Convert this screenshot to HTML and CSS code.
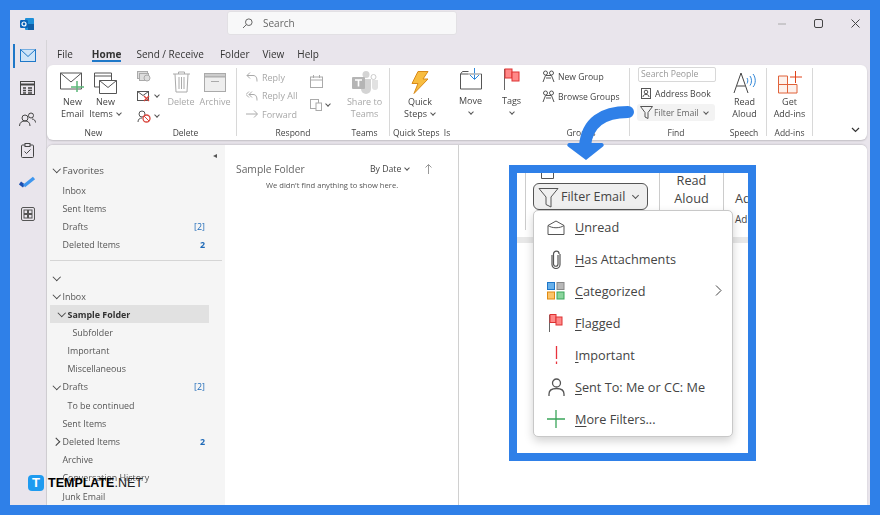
FILE: index.html
```html
<!DOCTYPE html>
<html lang="en">
<head>
<meta charset="utf-8">
<title>Outlook Filter Email</title>
<link rel="stylesheet" href="styles.css">
</head>
<body>
<div class="frame">
<div class="window">
  <header class="titlebar">
    <svg class="app-logo" width="14" height="14" viewBox="0 0 14 14"><rect x="5" y="1" width="9" height="12" rx="1" fill="#1f8fd8"/><rect x="8" y="7" width="6" height="6" fill="#0f5fa8"/><rect x="0" y="3" width="8" height="8" rx="1.2" fill="#0b63b8"/><circle cx="4" cy="7" r="2" fill="none" stroke="#fff" stroke-width="1.2"/></svg>
    <div class="search">
      <svg width="11" height="11" viewBox="0 0 11 11" fill="none" stroke="#666"><circle cx="6.8" cy="4.2" r="3.3"/><path d="M4.4 6.6 1 10"/></svg>
      <span>Search</span>
    </div>
    <div class="controls">
      <svg width="8" height="8" viewBox="0 0 8 8" stroke="#aaa" fill="none"><path d="M0 4h8"/></svg>
      <svg width="9" height="9" viewBox="0 0 9 9" stroke="#444" fill="none"><rect x=".5" y=".5" width="8" height="8" rx="1.5"/></svg>
      <svg width="9" height="9" viewBox="0 0 9 9" stroke="#444" fill="none"><path d="m.5.5 8 8M8.500.5l-8 8"/></svg>
    </div>
  </header>
  <div class="body">
    <nav class="rail">
      <div class="rail-item active"><svg width="16" height="13" viewBox="0 0 16 13" fill="#cfe4f7" stroke="#1f78c8"><rect x=".5" y=".5" width="15" height="12"/><path d="m.5.500 7.500 7 7.500-7"/></svg></div>
      <div class="rail-item"><svg width="15" height="15" viewBox="0 0 15 15" fill="none" stroke="#444"><rect x=".5" y="1.500" width="14" height="13"/><path d="M.5 4.500h14" stroke-width="2"/><path d="M3 8h3M8 8h4M3 10.500h3M8 10.500h4M3 13h3M8 13h4" stroke-width="1.300"/></svg></div>
      <div class="rail-item"><svg width="17" height="14" viewBox="0 0 17 14" fill="none" stroke="#444"><circle cx="6" cy="6" r="3"/><path d="M.5 14c0-3.500 2.500-5 5.500-5s5 1.500 5 5"/><circle cx="12" cy="3.500" r="2.500"/><path d="M13 7c2 0 3.500 1.500 3.500 3.500"/></svg></div>
      <div class="rail-item"><svg width="13" height="15" viewBox="0 0 13 15" fill="none" stroke="#444"><rect x=".5" y="2" width="12" height="12.500" rx="1"/><rect x="4" y=".5" width="5" height="3" fill="#e9e5ec"/><path d="m3.500 8.500 2 2 4-4"/></svg></div>
      <div class="rail-item"><svg width="17" height="13" viewBox="0 0 17 13" fill="none"><path d="m1 7 4 3" stroke="#1c4fb0" stroke-width="3.500"/><path d="m5 10 10-8" stroke="#3f96ee" stroke-width="3.500"/></svg></div>
      <div class="rail-item"><svg width="14" height="14" viewBox="0 0 14 14" fill="none" stroke="#555"><rect x=".5" y=".5" width="13" height="13" rx="1.500"/><rect x="3" y="3" width="3.500" height="3.500"/><rect x="7.500" y="3" width="3.500" height="3.500"/><rect x="3" y="7.500" width="3.500" height="3.500"/><rect x="7.500" y="7.500" width="3.500" height="3.500"/></svg></div>
    </nav>
    <div class="main">
      <div class="tabs">
        <span class="tab t-file">File</span>
        <span class="tab tab-home">Home</span>
        <span class="tab t-send">Send / Receive</span>
        <span class="tab t-folder">Folder</span>
        <span class="tab t-view">View</span>
        <span class="tab">Help</span>
      </div>
      <section class="ribbon">
        <div class="group g-new">
          <div class="group-body">
            <div class="big w33"><div class="ico"><svg width="25" height="21" viewBox="0 0 25 21" fill="none" stroke="#555"><path d="M.5 1h21v16H.5z" fill="#fff"/><path d="m.5 1 10.500 9 10.500-9"/><path d="M17 9v11M11 15h13" stroke="#5cb87a" stroke-width="1.500"/></svg></div><span>New</span><span>Email</span></div>
            <div class="big w33"><div class="ico"><svg width="23" height="23" viewBox="0 0 23 23" fill="none" stroke="#555"><path d="M.5 2h17v14H.5zM.5 5h17"/><path d="M5.500 9.500h17v13h-17z" fill="#fff"/><path d="m5.500 9.500 8.500 7 8.500-7"/></svg></div><span>New</span><span>Items<i class="caret"></i></span></div>
          </div>
          <div class="group-label">New</div>
        </div>
        <div class="group g-delete">
          <div class="group-body">
            <div class="small-icons">
              <svg width="14" height="11" viewBox="0 0 14 11" fill="#ddd" stroke="#aaa"><rect x=".5" y=".5" width="10" height="7"/><rect x="2.500" y="2.500" width="9" height="7"/><circle cx="10" cy="7" r="3"/></svg>
              <span class="small-line"><svg width="14" height="12" viewBox="0 0 14 12" fill="none" stroke="#555"><rect x=".5" y="1.500" width="11" height="9"/><path d="m.5 1.500 5.500 4 5.500-4"/><path d="m7 6 5 5m0-5-5 5" stroke="#d9453c" stroke-width="1.300"/></svg><i class="caret"></i></span>
              <span class="small-line"><svg width="14" height="13" viewBox="0 0 14 13" fill="none" stroke="#555"><circle cx="5" cy="4" r="3"/><path d="M1 12c0-3 2-4 4-4"/><circle cx="9.500" cy="8.500" r="3.500" stroke="#d9453c" stroke-width="1.300"/><path d="m7 6 5 5" stroke="#d9453c"/></svg><i class="caret"></i></span>
            </div>
            <div class="big w32 off"><div class="ico"><svg width="17" height="22" viewBox="0 0 17 22" fill="none" stroke="#aaa"><path d="M0 3h17M5.500 3V1h6v2M2 3l1 18h11l1-18M6 6v12M8.500 6v12M11 6v12"/></svg></div><span>Delete</span></div>
            <div class="big w36 off"><div class="ico"><svg width="22" height="19" viewBox="0 0 22 19" fill="#eee" stroke="#aaa"><rect x=".5" y=".5" width="21" height="3.500" fill="#ccc"/><rect x=".5" y="4" width="21" height="14.500"/><path d="M7 8.500h8"/></svg></div><span>Archive</span></div>
          </div>
          <div class="group-label">Delete</div>
        </div>
        <div class="group g-respond">
          <div class="group-body">
            <div class="stack off">
              <span class="line"><svg width="12" height="10" viewBox="0 0 12 10" fill="none" stroke="#aaa"><path d="M4 .5 1 3.500l3 3M1 3.500h6c3 0 4 2 4 6"/></svg>Reply</span>
              <span class="line"><svg width="12" height="10" viewBox="0 0 12 10" fill="none" stroke="#aaa"><path d="M3 .5 0 3.500l3 3M6 .5 3 3.500l3 3M3 3.500h4c3 0 4 2 4 6"/></svg>Reply All</span>
              <span class="line"><svg width="12" height="10" viewBox="0 0 12 10" fill="none" stroke="#aaa"><path d="M8 1.500 11.500 5 8 8.500M11 5H0"/></svg>Forward</span>
            </div>
            <div class="respond-more">
              <svg width="13" height="13" viewBox="0 0 13 13" fill="none" stroke="#aaa"><rect x=".5" y="2" width="12" height="10.500"/><path d="M.5 5h12M3.500 0v3M9.500 0v3"/></svg>
              <span class="small-line"><svg width="12" height="12" viewBox="0 0 12 12" fill="none" stroke="#aaa"><rect x=".5" y=".5" width="8" height="9"/><rect x="6" y="4" width="5.500" height="7.500" fill="#fff"/></svg><i class="caret"></i></span>
            </div>
          </div>
          <div class="group-label">Respond</div>
        </div>
        <div class="group g-teams">
          <div class="group-body">
            <div class="big w50 off"><div class="ico"><svg width="26" height="23" viewBox="0 0 26 23" fill="#d4d4d4"><circle cx="14" cy="3.500" r="3.500"/><circle cx="21.500" cy="6" r="2.500" fill="none" stroke="#ccc"/><path d="M9 8h10v10a5 5 0 0 1-10 0z"/><path d="M20 9h6v7a3 3 0 0 1-6 0z" fill="#e2e2e2"/><rect y="6" width="13" height="12" rx="1" fill="#b5b5b5"/><path d="M3 9h7M6.500 9v6.500" stroke="#fff" stroke-width="1.600"/></svg></div><span>Share to</span><span>Teams</span></div>
          </div>
          <div class="group-label">Teams</div>
        </div>
        <div class="group g-quick">
          <div class="group-body">
            <div class="big w60"><div class="ico"><svg width="18" height="23" viewBox="0 0 18 23"><path d="M7 .5h10l-5 7.500h5L3 22.500l4-10H1z" fill="#f8bd40" stroke="#d88a1a"/></svg></div><span>Quick</span><span>Steps<i class="caret"></i></span></div>
            <div class="big w41 short"><div class="ico"><svg width="22" height="22" viewBox="0 0 22 22" fill="none" stroke="#555"><path d="M.5 6h21v15H.5zM.5 6l2-2.500h6"/><path d="M14.500 0v11" stroke="#2f86d8"/><path d="m10 7 4.500 4.500L19 7" stroke="#2f86d8"/><path d="M8 6h13" stroke="#ddd"/></svg></div><span>Move</span><span class="caret-line"><i class="caret"></i></span></div>
            <div class="big w41 short"><div class="ico"><svg width="16" height="22" viewBox="0 0 16 22" fill="none"><path d="M.5 1v21" stroke="#666"/><rect x="1" y="1" width="7" height="9" fill="#f88" stroke="#d33"/><rect x="8" y="4" width="7" height="9" fill="#f88" stroke="#d33"/></svg></div><span>Tags</span><span class="caret-line"><i class="caret"></i></span></div>
          </div>
          <div class="group-label label-left">Quick Steps &nbsp;Is</div>
        </div>
        <div class="group g-groups">
          <div class="group-body">
            <div class="stack groups-stack">
              <span class="line"><svg width="13" height="13" viewBox="0 0 13 13" fill="none" stroke="#555"><circle cx="3.500" cy="3" r="2"/><circle cx="9.500" cy="3" r="2"/><path d="M1 12l2.500-6.500h6L12 12M4 8h5"/></svg>New Group</span>
              <span class="line"><svg width="13" height="13" viewBox="0 0 13 13" fill="none" stroke="#555"><circle cx="3.500" cy="3" r="2"/><circle cx="9.500" cy="3" r="2"/><path d="M1 12l2.500-6.500h6L12 12M4 8h5"/></svg>Browse Groups</span>
            </div>
          </div>
          <div class="group-label">Groups</div>
        </div>
        <div class="group g-find">
          <div class="group-body find-body">
            <div class="search-people">Search People</div>
            <span class="line"><svg width="10" height="11" viewBox="0 0 10 11" fill="none" stroke="#555"><rect x=".5" y=".5" width="9" height="10"/><circle cx="5" cy="4" r="1.800"/><path d="M2 9c0-2 1.500-2.500 3-2.500S8 7 8 9"/></svg>Address Book</span>
            <span class="line filter-line"><svg width="13" height="13" viewBox="0 0 13 13" fill="none" stroke="#555"><path d="M.5.500h12L8 6.500v6l-3-1.500V6.500z"/></svg>Filter Email<i class="caret"></i></span>
          </div>
          <div class="group-label">Find</div>
        </div>
        <div class="group g-speech">
          <div class="group-body">
            <div class="big w44"><div class="ico"><svg width="23" height="23" viewBox="0 0 23 23" fill="none"><path d="m1 22 7-20 7 20M4 15h8" stroke="#444"/><path d="M14 7c1 1.500 1 4 0 5.500M17 5c2 2.500 2 7 0 9.500M20 3c3 3.500 3 10 0 13" stroke="#2f86d8"/></svg></div><span>Read</span><span>Aloud</span></div>
          </div>
          <div class="group-label">Speech</div>
        </div>
        <div class="group g-addins">
          <div class="group-body">
            <div class="big w46"><div class="ico"><svg width="24" height="23" viewBox="0 0 24 23" fill="none" stroke="#e0623a"><path d="M.5 5h9v8.500h-9zM.5 13.500h9V22h-9zM9.500 13.500H19V22H9.500z" fill="#fdf1ec"/><path d="M17.500 0v12M12 6h12" stroke="#e0421a"/></svg></div><span>Get</span><span>Add-ins</span></div>
          </div>
          <div class="group-label">Add-ins</div>
        </div>
        <svg class="ribbon-collapse" width="9" height="6" viewBox="0 0 9 6" fill="none" stroke="#333" stroke-width="1.200"><path d="m1 1 3.500 3.500L8 1"/></svg>
      </section>
      <section class="content">
        <aside class="nav">
          <div class="nav-collapse">◂</div>
          <div class="row head"><i class="chev d"></i>Favorites</div>
          <div class="row"><i class="chev"></i>Inbox</div>
          <div class="row"><i class="chev"></i>Sent Items</div>
          <div class="row"><i class="chev"></i><span class="grow">Drafts</span><b class="count thin">[2]</b></div>
          <div class="row"><i class="chev"></i><span class="grow">Deleted Items</span><b class="count">2</b></div>
          <hr class="nav-rule">
          <div class="row"><i class="chev d"></i></div>
          <div class="row"><i class="chev d"></i>Inbox</div>
          <div class="row lvl1 selected"><i class="chev d"></i>Sample Folder</div>
          <div class="row lvl2"><i class="chev"></i>Subfolder</div>
          <div class="row lvl1"><i class="chev"></i>Important</div>
          <div class="row lvl1"><i class="chev"></i>Miscellaneous</div>
          <div class="row"><i class="chev d"></i><span class="grow">Drafts</span><b class="count thin">[2]</b></div>
          <div class="row lvl1"><i class="chev"></i>To be continued</div>
          <div class="row"><i class="chev"></i>Sent Items</div>
          <div class="row"><i class="chev r"></i><span class="grow">Deleted Items</span><b class="count">2</b></div>
          <div class="row"><i class="chev"></i>Archive</div>
          <div class="row"><i class="chev"></i>Conversation History</div>
          <div class="row"><i class="chev"></i>Junk Email</div>
        </aside>
        <div class="list">
          <div class="list-head">
            <span class="list-title">Sample Folder</span>
            <span class="sort">By Date<i class="caret"></i></span>
            <svg width="7" height="10" viewBox="0 0 7 10" fill="none" stroke="#999"><path d="M3.500 10V.5M.5 3.500l3-3 3 3"/></svg>
          </div>
          <p class="empty">We didn't find anything to show here.</p>
        </div>
        <div class="reading"></div>
      </section>
    </div>
  </div>
</div>
</div>

<svg class="arrow" width="70" height="60" viewBox="0 0 70 60"><path d="M63 8C38 8 22 18 20 42" fill="none" stroke="#2f80e8" stroke-width="12" stroke-linecap="round"/><path d="M4 39h33a2 2 0 0 1 1 3.500L21 56 3 42.500A2 2 0 0 1 4 39z" fill="#2f80e8"/></svg>

<div class="callout">
  <div class="strip">
    <div class="cell cell-a">
      <svg class="book-end" width="13" height="6" viewBox="0 0 13 6" fill="none" stroke="#555"><path d="M.5 0v5.500h12V0"/></svg>
      <div class="filter-btn"><svg width="22" height="22" viewBox="0 0 22 22" fill="none" stroke="#555"><path d="M1 2.500h19L13 11v10l-5-2.500V11z"/></svg><span>Filter Email</span><i class="caret caret-lg"></i></div>
    </div>
    <div class="cell cell-b"><span>Read</span><span>Aloud</span></div>
    <div class="cell cell-c"><span>Ad</span><small>Ad</small></div>
  </div>
  <div class="menu">
    <div class="item"><span class="mi"><svg width="18" height="15" viewBox="0 0 18 15" fill="none" stroke="#555"><path d="M1 5.500 9 1l8 4.500V14.500H1z"/><path d="M1 5.500c4 3 12 3 16 0" /></svg></span><span class="it"><u>U</u>nread</span></div>
    <div class="item"><span class="mi"><svg width="10" height="19" viewBox="0 0 10 19" fill="none" stroke="#555" stroke-width="1.200"><path d="M7 5v9a2.200 2.200 0 0 1-4.500 0V4a2.800 2.800 0 0 1 5.600 0"/><path d="M9 4v10.500a4 4 0 0 1-8 0V5"/></svg></span><span class="it"><u>H</u>as Attachments</span></div>
    <div class="item"><span class="mi"><svg width="18" height="18" viewBox="0 0 18 18"><rect x=".5" y=".5" width="7" height="7" fill="#68b0ea" stroke="#1e76c8"/><rect x="10" y=".5" width="7" height="7" fill="#b8b8b8" stroke="#888"/><rect x=".5" y="10" width="7" height="7" fill="#fbc46a" stroke="#e08a10"/><rect x="10" y="10" width="7" height="7" fill="#8ad49c" stroke="#3aa55a"/></svg></span><span class="it"><u>C</u>ategorized</span><svg class="sub" width="7" height="11" viewBox="0 0 7 11" fill="none" stroke="#444"><path d="m1 .5 5 5-5 5"/></svg></div>
    <div class="item"><span class="mi"><svg width="14" height="18" viewBox="0 0 14 18" fill="none"><path d="M.5 1v17" stroke="#666"/><rect x="1" y=".5" width="6" height="8" fill="#f88" stroke="#d33"/><rect x="7" y="3" width="6" height="8" fill="#f88" stroke="#d33"/></svg></span><span class="it"><u>F</u>lagged</span></div>
    <div class="item"><span class="mi"><svg width="3" height="18" viewBox="0 0 3 18" fill="none" stroke="#e8323c" stroke-width="1.300"><path d="M1.500 0v13M1.500 15.500V18"/></svg></span><span class="it"><u>I</u>mportant</span></div>
    <div class="item"><span class="mi"><svg width="17" height="18" viewBox="0 0 17 18" fill="none" stroke="#555" stroke-width="1.300"><circle cx="8.500" cy="5" r="4"/><path d="M1 18v-2c0-3.500 3-5.500 7.500-5.500S16 12.500 16 16v2"/></svg></span><span class="it"><u>S</u>ent To: Me or CC: Me</span></div>
    <div class="item"><span class="mi"><svg width="18" height="18" viewBox="0 0 18 18" stroke="#3aa55a" stroke-width="1.300"><path d="M9 0v18M0 9h18"/></svg></span><span class="it"><u>M</u>ore Filters...</span></div>
  </div>
</div>

<div class="watermark">
  <span class="wm-logo">T</span><span class="wm-text"><b>TEMPLATE</b>.NET</span>
</div>
</body>
</html>
```

FILE: styles.css
```css
* { box-sizing: border-box; }
html, body { margin: 0; padding: 0; }
body {
  position: relative;
  width: 880px;
  height: 515px;
  overflow: hidden;
  font-family: "Open Sans", "Noto Sans", sans-serif;
  font-size: 9.5px;
  color: #444;
}
i { font-style: normal; }

.caret { display: inline-block; width: 4px; height: 4px; margin: 0 1px 2px 4px; border-right: 1px solid #555; border-bottom: 1px solid #555; transform: rotate(45deg); flex: none; }
.caret-line { height: 12px; display: flex; align-items: center; justify-content: center; }
.caret-line .caret { margin: 0 0 2px; }

.frame { width: 880px; height: 515px; padding: 10px 10px 10px; background: #2f80e8; }
.window { width: 860px; height: 495px; background: #e9e5ec; display: flex; flex-direction: column; overflow: hidden; filter: blur(.35px); }

.titlebar { height: 30px; flex: none; display: flex; align-items: flex-start; }
.app-logo { margin: 7px 0 0 10px; flex: none; }
.search {
  margin: 1px 0 0 193px; width: 230px; height: 24px; flex: none;
  background: #f8f8f9; border: 1px solid #e2e0e4; border-radius: 3px;
  display: flex; align-items: center; gap: 10px; padding-left: 14px;
  font-size: 10px; color: #666;
}
.controls { margin: 9px 10px 0 auto; display: flex; gap: 28px; align-items: center; }

.body { flex: 1; display: flex; min-height: 0; }
.rail { width: 37px; flex: none; border-right: 1px solid #d6d4d8; }
.rail-item { height: 31.700px; display: flex; align-items: center; justify-content: center; position: relative; padding-right: 1px; }
.rail-item.active::before { content: ""; position: absolute; left: 3px; top: 4px; width: 2px; height: 24px; background: #1f78c8; }

.main { flex: 1; min-width: 0; display: flex; flex-direction: column; padding-right: 3px; }
.tabs { height: 25px; flex: none; display: flex; padding: 7px 0 0 10px; font-size: 10px; color: #333; }
.tab { height: 15px; line-height: 14px; }
.t-file { margin-right: 19px; }
.tab-home { font-weight: 700; border-bottom: 2px solid #1f78c8; margin-right: 15px; }
.t-send { margin-right: 16px; }
.t-folder { margin-right: 13px; }
.t-view { margin-right: 13px; }

.ribbon {
  height: 75px; flex: none; background: #fff; border-radius: 6px;
  display: flex; padding-top: 3px; position: relative;
  box-shadow: 0 1px 2px rgba(0,0,0,.18);
  font-size: 9px;
}
.group { height: 68px; flex: none; display: flex; flex-direction: column; border-right: 1px solid #d8d8d8; }
.group-body { height: 60px; flex: none; display: flex; }
.group-label { height: 8px; line-height: 10px; text-align: center; color: #444; font-size: 8.500px; white-space: nowrap; }
.label-left { text-align: left; padding-left: 3px; }
.g-new { width: 84px; padding-left: 9px; border-right: 0; }
.g-delete { width: 106px; padding-left: 4px; }
.g-respond { width: 103px; padding-left: 9px; border-right: 0; }
.g-teams { width: 50px; }
.g-quick { width: 143px; border-right: 0; }
.g-groups { width: 97px; }
.g-find { width: 92px; border-right: 0; }
.g-speech { width: 45px; }
.g-addins { width: 46px; }

.big { display: flex; flex-direction: column; align-items: center; line-height: 12px; white-space: nowrap; flex: none; }
.ico { height: 28px; display: flex; align-items: center; justify-content: center; flex: none; }
.w32 { width: 32px; } .w33 { width: 33px; } .w36 { width: 36px; } .w41 { width: 41px; }
.w44 { width: 45px; } .w46 { width: 45px; } .w50 { width: 49px; } .w60 { width: 60px; }
.off { color: #a8a8a8; }
.short .ico { height: 27px; align-items: flex-start; }

.small-icons { width: 30px; display: flex; flex-direction: column; gap: 8px; padding: 3px 0 0 2px; flex: none; }
.small-line { display: flex; align-items: center; height: 12px; }
.stack { display: flex; flex-direction: column; gap: 7.500px; padding-top: 3.500px; width: 64px; flex: none; }
.line { display: flex; align-items: center; gap: 4px; height: 11px; white-space: nowrap; }
.respond-more { display: flex; flex-direction: column; gap: 11px; padding-top: 7px; }
.groups-stack { padding: 3px 0 0 9px; width: 97px; gap: 9px; font-size: 8.600px; }
.groups-stack .line { gap: 3px; }
.find-body { flex-direction: column; padding-left: 8px; font-size: 8.700px; }
.search-people { width: 78px; height: 15px; margin-top: -1px; border: 1px solid #d8d8d8; border-radius: 2px; padding-left: 2px; line-height: 13px; color: #999; }
.find-body .line { margin: 6px 0 0 3px; }
.find-body .filter-line { width: 78px; height: 17px; margin: 5px 0 0 -1px; padding-left: 3px; gap: 1px; background: #f3f3f3; border-radius: 3px; color: #666; }
.ribbon-collapse { position: absolute; right: 7px; bottom: 7px; }

.content { flex: 1; min-height: 0; margin-top: 5px; background: #fff; border-radius: 6px 6px 0 0; display: flex; overflow: hidden; box-shadow: 0 -1px 2px rgba(0,0,0,.12); }
.nav { width: 178px; flex: none; background: #f5f5f5; padding: 16px 0 0 3px; position: relative; font-size: 8.900px; color: #555; }
.nav-collapse { position: absolute; top: 4px; right: 8px; font-size: 8px; color: #555; }
.row { height: 18.200px; display: flex; align-items: center; padding: 0 20px 0 3px; white-space: nowrap; }
.row.head { height: 18px; margin-bottom: 2px; font-size: 9.800px; }
.chev { width: 9.500px; height: 6px; flex: none; position: relative; }
.chev.d::before, .chev.r::before { content: ""; position: absolute; left: 1px; top: -1px; width: 4.500px; height: 4.500px; border-right: 1px solid #444; border-bottom: 1px solid #444; transform: rotate(45deg); }
.chev.r::before { left: 0; top: .5px; transform: rotate(-45deg); }
.lvl1 { padding-left: 8px; }
.lvl2 { padding-left: 13px; }
.selected { width: 159px; background: #e1e1e1; font-weight: 700; color: #333; }
.grow { flex: 1; }
.count { color: #1f6ab8; font-weight: 700; }
.count.thin { font-weight: 400; }
.nav-rule { margin: 6px 3px 8px 0; border: 0; border-top: 1px solid #d5d5d5; height: 0; }

.list { width: 234px; flex: none; border-right: 1px solid #d0d0d0; padding: 16px 0 0 11px; }
.list-head { display: flex; align-items: center; height: 16px; }
.list-title { font-size: 10.300px; color: #666; width: 134px; }
.sort { font-size: 8.700px; color: #444; width: 55px; display: flex; align-items: center; }
.empty { margin: 3px 0 0; font-size: 7.600px; color: #555; padding-left: 30px; white-space: nowrap; }
.reading { flex: 1; background: #fff; }

.arrow { position: absolute; left: 565px; top: 104px; }

.callout { position: absolute; left: 509px; top: 165px; width: 247px; height: 296px; border: 8px solid #2f80e8; background: #fff; overflow: hidden; font-size: 12.700px; }
.strip { height: 70px; display: flex; border-bottom: 6px solid #e8e8e8; background: #fff; padding-left: 8px; }
.cell { height: 57px; display: flex; flex-direction: column; flex: none; }
.cell-a { width: 134px; border-left: 1px solid #ccc; position: relative; padding: 10px 0 0 7px; }
.book-end { margin-left: 8px; position: absolute; top: 0; left: 7px; }
.filter-btn { width: 115px; height: 27px; background: #efefef; border: 1px solid #555; border-radius: 6px; display: flex; align-items: center; padding-left: 4px; gap: 1px; font-size: 12.500px; color: #444; white-space: nowrap; }
.caret-lg { width: 5px; height: 5px; margin-left: 7px; }
.cell-b { width: 64px; height: 38px; border-left: 1px solid #ccc; align-items: center; line-height: 18px; }
.cell-b span:first-child { margin-top: -2px; }
.cell-c { height: 38px; border-left: 1px solid #ccc; padding: 16px 0 0 11px; line-height: 18px; }
.cell-c small { display: block; font-size: 10px; line-height: 12px; margin-top: 6px; }

.menu { position: absolute; left: 16px; top: 37px; width: 200px; height: 227px; background: #fff; border: 1px solid #c8c8c8; border-radius: 5px; box-shadow: 0 4px 10px rgba(0,0,0,.18); }
.item { height: 32px; display: flex; align-items: center; padding-left: 10px; position: relative; }
.mi { width: 24px; height: 24px; display: flex; align-items: center; justify-content: center; flex: none; margin-right: 7px; }
.it { font-size: 12.700px; color: #444; white-space: nowrap; }
.it u { text-decoration-thickness: 1px; text-underline-offset: 2px; }
.sub { position: absolute; right: 10px; top: 10px; }

.watermark { position: absolute; left: 28px; top: 475px; display: flex; align-items: center; gap: 4px; height: 16px; }
.wm-logo { width: 16px; height: 16px; border-radius: 4px; background: #1e9bf0; color: #fff; font: 700 13px/16px "Liberation Sans", sans-serif; text-align: center; }
.wm-text { font: 400 12.500px/16px "Liberation Sans", sans-serif; color: #222; }
.wm-text b { color: #000; }
```
